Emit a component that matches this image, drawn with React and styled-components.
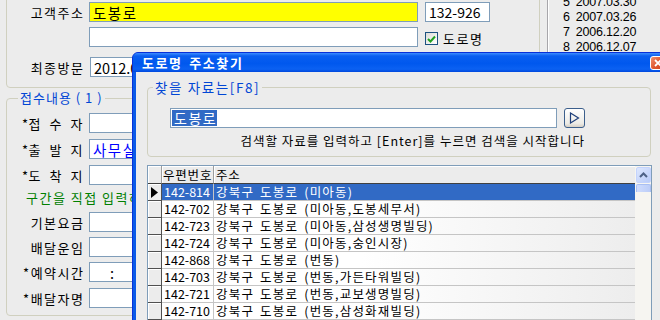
import React from 'react'
import styled, { createGlobalStyle } from 'styled-components'

const GlobalStyle = createGlobalStyle`
  html, body {
    margin: 0;
    padding: 0;
    background: #ececec;
  }
  body {
    font-family: "Noto Sans CJK KR", "Noto Sans", sans-serif;
  }
`

const Screen = styled.div`
  position: relative;
  width: 660px;
  height: 320px;
  overflow: hidden;
  background: #ececec;
  font-size: 13px;
  color: #000;
`

const MainArea = styled.div`
  display: flex;
  height: 100%;
`

const LeftColumn = styled.div`
  width: 534px;
  margin-left: 6px;
  display: flex;
  flex-direction: column;
`

const CustomerGroup = styled.div`
  margin-top: -10px;
  height: 98px;
  box-sizing: border-box;
  border: 1px solid #d0d0bf;
  border-radius: 0 0 4px 4px;
  padding-top: 11px;
  display: flex;
  flex-direction: column;
`

const Fieldset = styled.fieldset`
  margin: ${p => p.$mt || 0}px 0 0 0;
  padding: ${p => p.$pt || 0}px 0 ${p => p.$pb || 0}px 0;
  min-inline-size: 0;
  width: ${p => p.$w}px;
  height: ${p => (p.$h ? p.$h + 'px' : 'auto')};
  box-sizing: border-box;
  border: 1px solid #d0d0bf;
  border-radius: 4px;
`

const Legend = styled.legend`
  margin-left: ${p => p.$ml || 5}px;
  padding: 0 2px;
  height: 16px;
  line-height: 16px;
  font-size: ${p => p.$fs || 13}px;
  letter-spacing: ${p => p.$ls || 1}px;
  color: #0046d5;
  white-space: nowrap;
`

const Row = styled.div`
  display: flex;
  align-items: center;
  margin-top: ${p => p.$mt || 0}px;
  height: 20px;
`

const Label = styled.div`
  width: ${p => (p.$spread ? 61 : 77.5)}px;
  margin-left: ${p => (p.$spread ? 15 : 0)}px;
  margin-right: ${p => (p.$spread ? 6 : 4.5)}px;
  display: flex;
  justify-content: ${p => (p.$spread ? 'space-between' : 'flex-end')};
  font-size: 13px;
  letter-spacing: ${p => (p.$spread ? 0.5 : 1.5)}px;
  white-space: nowrap;
`

const Field = styled.div`
  width: ${p => p.$w}px;
  height: 20px;
  box-sizing: border-box;
  margin-left: ${p => p.$ml || 0}px;
  border: 1px solid #7f9db9;
  background: ${p => p.$bg || '#fff'};
  color: ${p => p.$color || '#000'};
  padding-left: ${p => (p.$pl != null ? p.$pl : 3)}px;
  display: flex;
  align-items: center;
  font-size: 14.5px;
  letter-spacing: ${p => (p.$num ? 0 : 1.5)}px;
  white-space: nowrap;
  overflow: hidden;
`

const CheckBox = styled.div`
  width: 13px;
  height: 13px;
  box-sizing: border-box;
  margin-left: 7px;
  margin-top: 3px;
  border: 1px solid #1c5180;
  background: linear-gradient(135deg, #dcdcd7, #fff);
  display: flex;
  align-items: center;
  justify-content: center;
`

const CheckText = styled.span`
  margin-left: 5px;
  margin-top: 3px;
  font-size: 13px;
  letter-spacing: 1.5px;
`

const Hint = styled.div`
  margin-top: 5px;
  margin-left: 19px;
  height: 16px;
  line-height: 16px;
  color: #008000;
  font-size: 13px;
  letter-spacing: 1.5px;
  white-space: nowrap;
`

const HistoryPanel = styled.div`
  margin-left: 7px;
  margin-top: -20px;
  flex: 1;
  height: 150px;
  border-left: 1px solid #a7a6aa;
  box-shadow: inset 1px 0 0 #fff;
  padding: 15px 0 0 15px;
`

const HistoryLine = styled.div`
  display: flex;
  gap: 6px;
  height: 15px;
  line-height: 15px;
  font-family: "Liberation Sans", Arial, sans-serif;
  font-size: 12.5px;
  letter-spacing: -0.2px;
`

const Dialog = styled.div`
  position: absolute;
  left: 132px;
  top: 52px;
  width: 540px;
  height: 290px;
  box-sizing: border-box;
  border: 1px solid #0831d9;
  border-radius: 6px 6px 0 0;
  background: #0a5ae8;
  padding: 0 3px 3px 3px;
  display: flex;
  flex-direction: column;
`

const TitleBar = styled.div`
  height: 19px;
  margin: 0 -3px;
  padding: 0 4px 0 9px;
  display: flex;
  align-items: center;
  background: linear-gradient(#3d8dff 0, #0a5ef0 3px, #0058ee 55%, #0b61f2 85%, #0048dd 100%);
  border-radius: 5px 5px 0 0;
`

const Title = styled.span`
  color: #fff;
  font-weight: bold;
  font-size: 13px;
  letter-spacing: 1.6px;
  word-spacing: 2px;
`

const CloseButton = styled.div`
  margin-left: auto;
  margin-right: 1px;
  width: 16px;
  height: 14px;
  box-sizing: border-box;
  border: 1px solid #fff;
  border-radius: 3px;
  background: linear-gradient(135deg, #f09070, #e0582f 50%, #c8401c);
  display: flex;
  align-items: center;
  justify-content: center;
`

const DialogBody = styled.div`
  flex: 1;
  background: #ececec;
  padding-left: 11px;
  display: flex;
  flex-direction: column;
`

const SearchInner = styled.div`
  margin-left: 22px;
  width: 415px;
  display: flex;
  flex-direction: column;
`

const SearchRow = styled.div`
  display: flex;
  align-items: center;
  gap: 7px;
`

const SearchInput = styled.div`
  width: 387px;
  height: 20px;
  box-sizing: border-box;
  border: 1px solid #7f9db9;
  background: #fff;
  padding-left: 1px;
  display: flex;
  align-items: center;
`

const Selected = styled.span`
  background: #316ac5;
  color: #fff;
  font-size: 14px;
  line-height: 16px;
  letter-spacing: 1.5px;
  padding: 0 0 0 2px;
`

const GoButton = styled.div`
  width: 21px;
  height: 20px;
  box-sizing: border-box;
  border: 1px solid #3c5f8c;
  border-radius: 3px;
  background: linear-gradient(#fff, #ecebe6 80%, #d6d0c5);
  display: flex;
  align-items: center;
  justify-content: center;
`

const SearchHelp = styled.div`
  margin-top: 5px;
  height: 16px;
  line-height: 16px;
  text-align: right;
  font-size: 12.5px;
  letter-spacing: 1px;
  white-space: nowrap;
`

const Grid = styled.div`
  margin-top: 8px;
  width: 505px;
  flex: 1;
  box-sizing: border-box;
  border: 1px solid #7f9db9;
  border-bottom: none;
  display: flex;
  background: #fff;
  overflow: hidden;
`

const GridTable = styled.div`
  flex: 1;
  display: flex;
  flex-direction: column;
`

const GridRow = styled.div`
  display: grid;
  grid-template-columns: 14px 52px 1fr;
  height: ${p => (p.$header ? 18 : 17)}px;
  flex-shrink: 0;
`

const HeaderCell = styled.div`
  box-sizing: border-box;
  background: #ececec;
  border-right: ${p => (p.$last ? 'none' : '1px solid #9d9d9d')};
  border-bottom: 1px solid #404040;
  box-shadow: inset 1px 1px 0 #fff;
  padding-left: ${p => (p.$last ? 2 : 1)}px;
  font-size: 12.5px;
  letter-spacing: 0.8px;
  line-height: 17px;
  white-space: nowrap;
  overflow: hidden;
`

const Indicator = styled.div`
  box-sizing: border-box;
  background: #ececec;
  border-right: 1px solid #505050;
  border-bottom: 1px solid #505050;
  box-shadow: inset 1px 1px 0 #fff;
  display: flex;
  align-items: center;
  justify-content: center;
`

const Cell = styled.div`
  box-sizing: border-box;
  padding-left: 2px;
  border-right: ${p => (p.$last ? 'none' : '1px solid #c5c5c5')};
  border-bottom: 1px solid #c5c5c5;
  background: ${p =>
    p.$active ? '#316ac5' : p.$last ? 'linear-gradient(90deg, #fff 0, #fff 35%, #ededed 100%)' : '#fff'};
  color: ${p => (p.$active ? '#fff' : '#000')};
  font-size: 12.5px;
  line-height: 16px;
  letter-spacing: ${p => (p.$last ? 1.2 : 0)}px;
  word-spacing: 2px;
  white-space: nowrap;
  overflow: hidden;
`

const ScrollBar = styled.div`
  width: 16px;
  background: #f6f5f1;
  padding-top: 1px;
  display: flex;
  flex-direction: column;
  align-items: center;
`

const ScrollArrow = styled.div`
  width: 15px;
  height: 16px;
  box-sizing: border-box;
  border: 1px solid #c3d3fd;
  border-radius: 2px;
  background: linear-gradient(135deg, #dde7fe, #b9cbf8);
  display: flex;
  align-items: center;
  justify-content: center;
`

const ScrollThumb = styled.div`
  width: 15px;
  height: 8px;
  box-sizing: border-box;
  margin-top: 1px;
  border: 1px solid #a9bff2;
  border-bottom: none;
  border-radius: 2px 2px 0 0;
  background: linear-gradient(90deg, #cfdcfd, #bccdf8);
`

const history = [
  ['5', '2007.03.30'],
  ['6', '2007.03.26'],
  ['7', '2006.12.20'],
  ['8', '2006.12.07'],
]

const addresses = [
  ['142-814', '강북구 도봉로 (미아동)'],
  ['142-702', '강북구 도봉로 (미아동,도봉세무서)'],
  ['142-723', '강북구 도봉로 (미아동,삼성생명빌딩)'],
  ['142-724', '강북구 도봉로 (미아동,숭인시장)'],
  ['142-868', '강북구 도봉로 (번동)'],
  ['142-703', '강북구 도봉로 (번동,가든타워빌딩)'],
  ['142-721', '강북구 도봉로 (번동,교보생명빌딩)'],
  ['142-710', '강북구 도봉로 (번동,삼성화재빌딩)'],
  ['142-711', '강북구 도봉로 (번동,우리은행)'],
]

const FieldLabel = ({ text, spread }) => (
  <Label $spread={spread}>
    {spread ? text.split(' ').map((t, i) => <span key={i}>{t}</span>) : text}
  </Label>
)

const App = () => {
  return (
    <Screen>
      <GlobalStyle />
      <MainArea>
        <LeftColumn>
          <CustomerGroup>
            <Row>
              <FieldLabel text='고객주소' />
              <Field $w={329} $bg='#ffff00'>도봉로</Field>
              <Field $w={65} $ml={7} $num style={{ fontSize: 14 }}>132-926</Field>
            </Row>
            <Row $mt={5}>
              <Label />
              <Field $w={329} />
              <CheckBox>
                <svg width='9' height='8' viewBox='0 0 9 8'>
                  <path d='M1 4 L3.5 6.5 L8 1.5' fill='none' stroke='#21a121' strokeWidth='2' />
                </svg>
              </CheckBox>
              <CheckText>도로명</CheckText>
            </Row>
            <Row $mt={10}>
              <FieldLabel text='최종방문' />
              <Field $w={120} $ml={1} $num>2012.03.15</Field>
            </Row>
          </CustomerGroup>

          <Fieldset $mt={2} $pt={7} $w={320} $h={226}>
            <Legend $ml={11}>접수내용 ( 1 )</Legend>
            <Row>
              <FieldLabel text='*접 수 자' spread />
              <Field $w={200} />
            </Row>
            <Row $mt={6}>
              <FieldLabel text='*출 발 지' spread />
              <Field $w={200} $color='#0000ff'>사무실</Field>
            </Row>
            <Row $mt={6}>
              <FieldLabel text='*도 착 지' spread />
              <Field $w={200} />
            </Row>
            <Hint>구간을 직접 입력하세요</Hint>
            <Row $mt={6}>
              <FieldLabel text='기본요금' />
              <Field $w={200} />
            </Row>
            <Row $mt={5}>
              <FieldLabel text='배달운임' />
              <Field $w={200} />
            </Row>
            <Row $mt={5}>
              <FieldLabel text='*예약시간' />
              <Field $w={60} $pl={20}>:</Field>
            </Row>
            <Row $mt={6}>
              <FieldLabel text='*배달자명' />
              <Field $w={200} />
            </Row>
          </Fieldset>
        </LeftColumn>

        <HistoryPanel>
          {history.map(([n, d]) => (
            <HistoryLine key={n}>
              <span>{n}</span>
              <span>{d}</span>
            </HistoryLine>
          ))}
        </HistoryPanel>
      </MainArea>

      <Dialog>
        <TitleBar>
          <Title>도로명 주소찾기</Title>
          <CloseButton>
            <svg width='8' height='8' viewBox='0 0 8 8'>
              <path d='M1 1 L7 7 M7 1 L1 7' stroke='#fff' strokeWidth='1.8' />
            </svg>
          </CloseButton>
        </TitleBar>
        <DialogBody>
          <Fieldset $mt={7} $pt={13} $pb={7} $w={504}>
            <Legend $ml={5} $fs={13.5} $ls={1.6}>찾을 자료는[F8]</Legend>
            <SearchInner>
              <SearchRow>
                <SearchInput>
                  <Selected>도봉로</Selected>
                </SearchInput>
                <GoButton>
                  <svg width='11' height='12' viewBox='0 0 11 12'>
                    <path d='M1.5 1 L9.5 6 L1.5 11 Z' fill='none' stroke='#1f3f7a' strokeWidth='1.2' />
                  </svg>
                </GoButton>
              </SearchRow>
              <SearchHelp>검색할 자료를 입력하고 [Enter]를 누르면 검색을 시작합니다</SearchHelp>
            </SearchInner>
          </Fieldset>

          <Grid>
            <GridTable>
              <GridRow $header>
                <HeaderCell />
                <HeaderCell>우편번호</HeaderCell>
                <HeaderCell $last>주소</HeaderCell>
              </GridRow>
              {addresses.map(([zip, addr], i) => (
                <GridRow key={zip}>
                  <Indicator>
                    {i === 0 && (
                      <svg width='7' height='11' viewBox='0 0 7 11'>
                        <polygon points='0,0 7,5.5 0,11' fill='#000' />
                      </svg>
                    )}
                  </Indicator>
                  <Cell $active={i === 0}>{zip}</Cell>
                  <Cell $active={i === 0} $last>{addr}</Cell>
                </GridRow>
              ))}
            </GridTable>
            <ScrollBar>
              <ScrollArrow>
                <svg width='9' height='6' viewBox='0 0 9 6'>
                  <path d='M1 5 L4.5 1.5 L8 5' fill='none' stroke='#4d6185' strokeWidth='2' />
                </svg>
              </ScrollArrow>
              <ScrollThumb />
            </ScrollBar>
          </Grid>
        </DialogBody>
      </Dialog>
    </Screen>
  )
}

export default App
